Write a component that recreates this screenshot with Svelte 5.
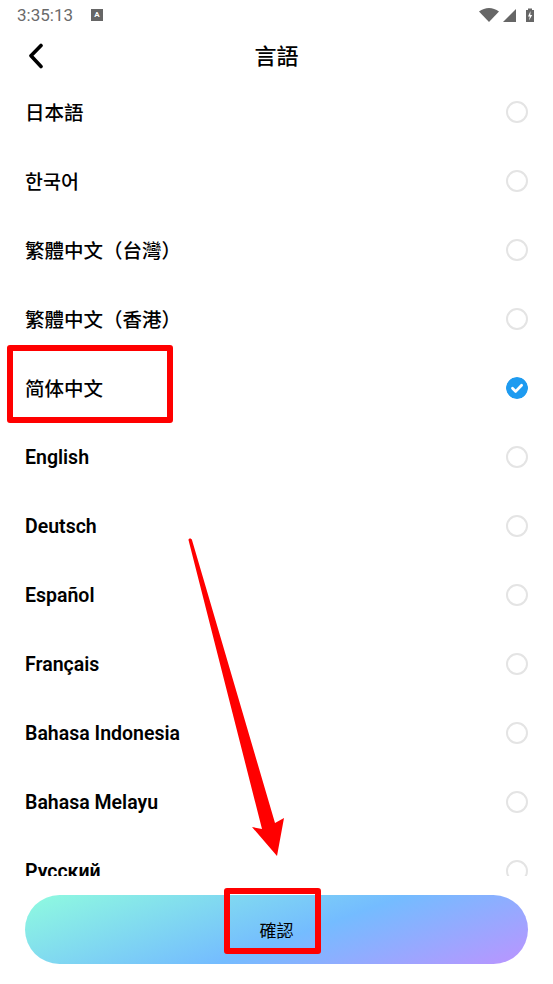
<script>
	const languages = [
		'日本語',
		'한국어',
		'繁體中文（台灣）',
		'繁體中文（香港）',
		'简体中文',
		'English',
		'Deutsch',
		'Español',
		'Français',
		'Bahasa Indonesia',
		'Bahasa Melayu',
		'Русский'
	];
	const cjkFor = (name) => (name === '한국어' ? 'kr' : name === '简体中文' ? 'sc' : /^[日繁]/.test(name) ? 'tc' : 'latin');
	let selected = $state('简体中文');
</script>

<div class="screen">
	<div class="status">
		<span class="time">3:35:13</span>
		<span class="ime">A</span>
		<span class="spacer"></span>
		<svg class="sys" width="64" height="16" viewBox="0 0 64 16">
			<path d="M1 4.500C4 2.200 7.600 1 11 1s7 1.200 10 3.500L11 15z" fill="#666" />
			<path d="M25 15 38 2v13z" fill="#666" />
			<path d="M48 3h2V1.500h4V3h2v12h-8z" fill="#666" />
			<path d="M52.500 4 50 9.500h1.800L51 13.500l3.200-5.500h-1.900z" fill="#fff" />
		</svg>
	</div>

	<header class="bar">
		<button class="back" aria-label="返回">
			<svg width="16" height="26" viewBox="0 0 16 26">
				<path d="M13 2.500 3 12.800 13 23.500" fill="none" stroke="#000" stroke-width="3.600" stroke-linecap="round" stroke-linejoin="round" />
			</svg>
		</button>
		<h1>言語</h1>
	</header>

	<ul class="list">
		{#each languages as lang}
			<li class="row">
				<button class="lang {cjkFor(lang)}" onclick={() => (selected = lang)}>{lang}</button>
				{#if lang === selected}
					<svg class="radio" width="22" height="22" viewBox="0 0 22 22">
						<circle cx="11" cy="11" r="11" fill="#1e9bf0" />
						<path d="M6.500 11.300 9.700 14.400 15.600 8.300" fill="none" stroke="#fff" stroke-width="2.800" stroke-linecap="round" stroke-linejoin="round" />
					</svg>
				{:else}
					<span class="radio off"></span>
				{/if}
			</li>
		{/each}
	</ul>

	<div class="footer">
		<button class="confirm">確認</button>
	</div>

	<!-- annotations drawn over the screenshot -->
	<div class="mark mark-lang"></div>
	<div class="mark mark-confirm"></div>
	<svg class="arrow" width="553" height="984" viewBox="0 0 553 984">
		<path d="M188.500 540C188.500 538 191.500 538 192 540L275 823 284 818 277 856 252 827 262 829z" fill="#f00" />
	</svg>
</div>

<style>
	:global(body) {
		margin: 0;
		background: #fff;
	}

	.screen {
		position: relative;
		width: 553px;
		height: 984px;
		display: flex;
		flex-direction: column;
		overflow: hidden;
		background: #fff;
		font-family: Roboto, 'Noto Sans CJK TC', sans-serif;
	}

	.status {
		height: 30px;
		flex-shrink: 0;
		display: flex;
		align-items: center;
		padding: 0 11px 0 17px;
		box-sizing: border-box;
	}

	.time {
		font-size: 17px;
		color: #6a6a6a;
	}

	.ime {
		width: 12px;
		height: 12px;
		margin-left: 18px;
		background: #666;
		color: #fff;
		font-size: 8px;
		font-weight: 700;
		line-height: 11px;
		text-align: center;
	}

	.spacer {
		flex: 1;
	}

	.sys {
		margin-bottom: 1px;
	}

	.bar {
		height: 47px;
		flex-shrink: 0;
		display: flex;
		align-items: center;
		justify-content: center;
		position: relative;
	}

	.back {
		position: absolute;
		left: 28px;
		top: 13px;
		padding: 0;
		border: none;
		background: none;
		display: flex;
	}

	h1 {
		margin: 0;
		font-size: 22px;
		font-weight: 500;
		color: #000;
	}

	.list {
		list-style: none;
		margin: 0;
		padding: 0;
		height: 799px;
		flex-shrink: 0;
		overflow: hidden;
	}

	.row {
		height: 69px;
		display: flex;
		align-items: center;
		justify-content: space-between;
		padding: 0 25px;
	}

	.lang {
		padding: 0;
		border: none;
		background: none;
		font-family: inherit;
		font-size: 19.500px;
		font-weight: 500;
		color: #000;
	}

	.lang.latin {
		font-weight: 600;
		padding-top: 2px;
	}

	.lang.kr {
		font-family: Roboto, 'Noto Sans CJK KR', sans-serif;
	}

	.lang.sc {
		font-family: Roboto, 'Noto Sans CJK SC', sans-serif;
	}

	.radio {
		width: 22px;
		height: 22px;
		flex-shrink: 0;
		box-sizing: border-box;
		border-radius: 50%;
	}

	.radio.off {
		border: 2px solid #e4e4e4;
	}

	.footer {
		padding: 19px 25px 0;
	}

	.confirm {
		width: 100%;
		height: 69px;
		border: none;
		border-radius: 35px;
		background: linear-gradient(160deg, #8ffbdf 0%, #74bcff 55%, #bb94ff 100%);
		font-family: inherit;
		font-size: 17px;
		font-weight: 400;
		color: #000;
	}

	.mark {
		position: absolute;
		box-sizing: border-box;
		border: 6px solid #f00;
		border-radius: 3px;
	}

	.mark-lang {
		left: 7px;
		top: 345px;
		width: 166px;
		height: 78px;
	}

	.mark-confirm {
		left: 224px;
		top: 888px;
		width: 97px;
		height: 66px;
	}

	.arrow {
		position: absolute;
		left: 0;
		top: 0;
		pointer-events: none;
	}
</style>
